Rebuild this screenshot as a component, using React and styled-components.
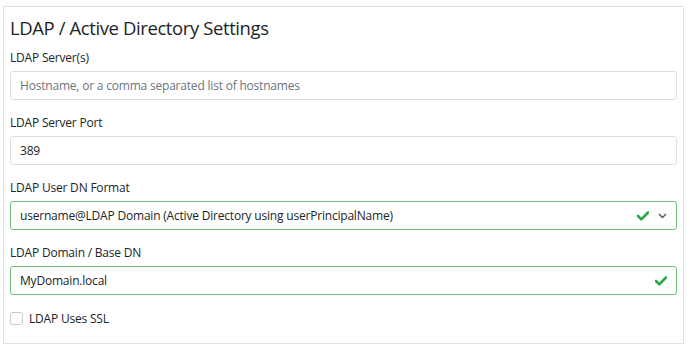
import React from "react";
import styled, { createGlobalStyle } from "styled-components";

const Global = createGlobalStyle`
  html, body { margin: 0; padding: 0; background: #fff; }
  body { font-family: "Open Sans", "Noto Sans", Arial, sans-serif; color: #212529; }
  * { box-sizing: border-box; }
`;

const Page = styled.div`
  padding: 6px 0 0 3px;
`;

const Card = styled.section`
  width: 681px;
  height: 338px;
  border: 1px solid #dee2e6;
  padding: 9px 6px 0 6px;
`;

const Title = styled.h2`
  margin: 0 0 8px 0;
  font-size: 18.5px;
  letter-spacing: -0.4px;
  font-weight: 400;
  line-height: 24px;
  color: #212529;
`;

const Group = styled.div`
  margin-bottom: 13px;
`;

const Label = styled.label`
  display: block;
  font-size: 12px;
  letter-spacing: -0.2px;
  line-height: 19px;
  margin-bottom: 4px;
  color: #212529;
`;

const FieldWrap = styled.div`
  position: relative;
`;

const Input = styled.input`
  display: block;
  width: 100%;
  height: 29px;
  padding: 0 9px;
  font-family: inherit;
  font-size: 12px;
  letter-spacing: -0.2px;
  color: #212529;
  background: #fff;
  border: 1px solid ${(p) => (p.$valid ? "#6cc07b" : "#dcdfe3")};
  border-radius: 3px;
  outline: none;
  &::placeholder { color: #6c757d; }
`;

const SelectBox = styled.div`
  display: flex;
  align-items: center;
  height: 29px;
  padding: 0 9px;
  font-size: 12px;
  letter-spacing: -0.2px;
  color: #212529;
  border: 1px solid #6cc07b;
  border-radius: 3px;
`;

const SelectText = styled.span`
  flex: 1;
  white-space: nowrap;
`;

const Icons = styled.span`
  position: absolute;
  top: 0;
  bottom: 0;
  right: 10px;
  display: flex;
  align-items: center;
  gap: 9px;
`;

const CheckRow = styled.label`
  display: flex;
  align-items: center;
  gap: 6px;
  height: 20px;
  font-size: 12px;
  letter-spacing: -0.2px;
`;

const CheckBox = styled.span`
  width: 13px;
  height: 13px;
  border: 1px solid #c4c8cc;
  border-radius: 3px;
  background: #fff;
`;

const Check = () => (
  <svg width="12" height="10" viewBox="0 0 12 10">
    <path d="M1 5 L4.3 8.3 L11 1.5" fill="none" stroke="#28a745" strokeWidth="2.6" strokeLinecap="round" strokeLinejoin="round" />
  </svg>
);

const Chevron = () => (
  <svg width="9" height="6" viewBox="0 0 9 6">
    <path d="M1 1 L4.5 4.5 L8 1" fill="none" stroke="#495057" strokeWidth="1.3" />
  </svg>
);

export default function App() {
  return (
    <>
      <Global />
      <Page>
        <Card>
          <Title>LDAP / Active Directory Settings</Title>
          <Group>
            <Label>LDAP Server(s)</Label>
            <Input placeholder="Hostname, or a comma separated list of hostnames" />
          </Group>
          <Group>
            <Label>LDAP Server Port</Label>
            <Input defaultValue="389" />
          </Group>
          <Group>
            <Label>LDAP User DN Format</Label>
            <FieldWrap>
              <SelectBox>
                <SelectText>username@LDAP Domain (Active Directory using userPrincipalName)</SelectText>
              </SelectBox>
              <Icons>
                <Check />
                <Chevron />
              </Icons>
            </FieldWrap>
          </Group>
          <Group>
            <Label>LDAP Domain / Base DN</Label>
            <FieldWrap>
              <Input $valid defaultValue="MyDomain.local" />
              <Icons>
                <Check />
              </Icons>
            </FieldWrap>
          </Group>
          <CheckRow>
            <CheckBox />
            LDAP Uses SSL
          </CheckRow>
        </Card>
      </Page>
    </>
  );
}
